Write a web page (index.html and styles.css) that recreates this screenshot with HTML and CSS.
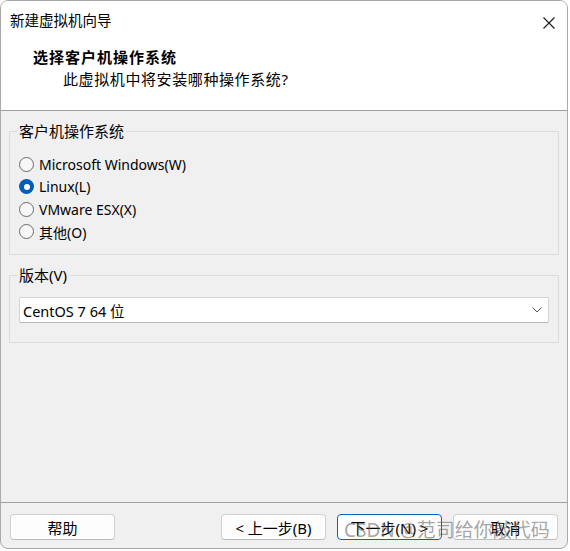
FILE: index.html
```html
<!DOCTYPE html>
<html lang="zh-CN">
<head>
  <meta charset="UTF-8">
  <title>新建虚拟机向导</title>
  <link rel="stylesheet" href="styles.css">
</head>
<body>
<div class="window">
  <div class="titlebar">
    <span class="title">新建虚拟机向导</span>
    <svg class="close" width="12" height="12" viewBox="0 0 12 12">
      <path d="M0.5 0.5 L11.5 11.5 M11.5 0.5 L0.5 11.5" stroke="#1a1a1a" stroke-width="1.1" fill="none"/>
    </svg>
  </div>
  <div class="header">
    <h1>选择客户机操作系统</h1>
    <p>此虚拟机中将安装哪种操作系统?</p>
  </div>

  <div class="content">
    <fieldset class="group os">
      <legend>客户机操作系统</legend>
      <div class="radio"><span class="dot"></span>Microsoft Windows(W)</div>
      <div class="radio"><span class="dot checked"></span>Linux(L)</div>
      <div class="radio"><span class="dot"></span>VMware ESX(X)</div>
      <div class="radio"><span class="dot"></span>其他(O)</div>
    </fieldset>

    <fieldset class="group version">
      <legend>版本(V)</legend>
      <div class="select">
        <span>CentOS 7 64 位</span>
        <svg width="10" height="6" viewBox="0 0 10 6">
          <path d="M0.5 0.5 L5 5 L9.5 0.5" stroke="#555" stroke-width="1" fill="none"/>
        </svg>
      </div>
    </fieldset>
  </div>

  <div class="footer">
    <button class="btn">帮助</button>
    <button class="btn back">&lt; 上一步(B)</button>
    <button class="btn default">下一步(N) &gt;</button>
    <button class="btn">取消</button>
    <div class="watermark">CSDN @范司给你敲代码</div>
  </div>
</div>
</body>
</html>
```

FILE: styles.css
```css
body {
  margin: 0;
  background: #fff;
  font-family: "Noto Sans", "Noto Sans CJK SC", sans-serif;
  font-size: 15px;
  color: #000;
}

.window {
  width: 568px;
  height: 549px;
  box-sizing: border-box;
  border: 1px solid #a9a9a9;
  border-radius: 8px;
  background: #f0f0f0;
  display: flex;
  flex-direction: column;
  overflow: hidden;
  position: relative;
}

.titlebar {
  height: 30px;
  box-sizing: border-box;
  padding: 9px 12px 0 9px;
  background: #fff;
  display: flex;
  justify-content: space-between;
  align-items: flex-start;
}

.title {
  line-height: 20px;
  font-size: 14.5px;
}

.close {
  margin-top: 7px;
}

.header {
  height: 80px;
  box-sizing: border-box;
  background: #fff;
  border-bottom: 1px solid #a0a0a0;
  padding: 16px 0 0 32px;
}

.header h1 {
  margin: 0;
  font-size: 15px;
  font-weight: bold;
  line-height: 20px;
  letter-spacing: 1px;
}

.header p {
  margin: 2px 0 0 30px;
  line-height: 20px;
  font-size: 15px;
  letter-spacing: 0.6px;
}

.content {
  flex: 1;
  padding: 10px 8px 0 8px;
}

.group {
  margin: 0;
  border: 1px solid #dcdcdc;
  padding: 0 9px;
}

.group legend {
  padding: 0 2px;
  margin-left: -2px;
  line-height: 20px;
}

.os {
  padding-top: 12px;
  padding-bottom: 11px;
}

.version {
  margin-top: 10px;
  padding-top: 12px;
  padding-bottom: 19px;
}

.radio {
  height: 22.5px;
  display: flex;
  align-items: center;
  gap: 5px;
  font-size: 14px;
}

.dot {
  width: 15px;
  height: 15px;
  box-sizing: border-box;
  border: 1px solid #6b6b6b;
  border-radius: 50%;
  background: #f7f7f7;
}

.dot.checked {
  border: none;
  background: #005fb8;
  display: flex;
  align-items: center;
  justify-content: center;
}

.dot.checked::after {
  content: "";
  width: 6px;
  height: 6px;
  border-radius: 50%;
  background: #fff;
}

.select {
  height: 26px;
  box-sizing: border-box;
  background: #fff;
  border: 1px solid #d4d4d4;
  border-bottom-color: #b8b8b8;
  border-radius: 2px;
  display: flex;
  align-items: center;
  justify-content: space-between;
  padding: 0 6px 0 3px;
  font-size: 14.5px;
}

.footer {
  border-top: 1px solid #a0a0a0;
  padding: 11px 9px 8px 9px;
  display: flex;
  gap: 11px;
  position: relative;
}

.btn {
  width: 105px;
  height: 26px;
  font-family: inherit;
  font-size: 15px;
  color: #000;
  background: #fdfdfd;
  border: 1px solid #d0d0d0;
  border-bottom-color: #bcbcbc;
  border-radius: 4px;
  padding: 0;
}

.back {
  margin-left: auto;
}

.default {
  border: 1px solid #0067c0;
}

.watermark {
  position: absolute;
  left: 343px;
  top: 12px;
  font-size: 19px;
  color: rgba(90, 90, 90, 0.55);
  white-space: nowrap;
  pointer-events: none;
}
```
